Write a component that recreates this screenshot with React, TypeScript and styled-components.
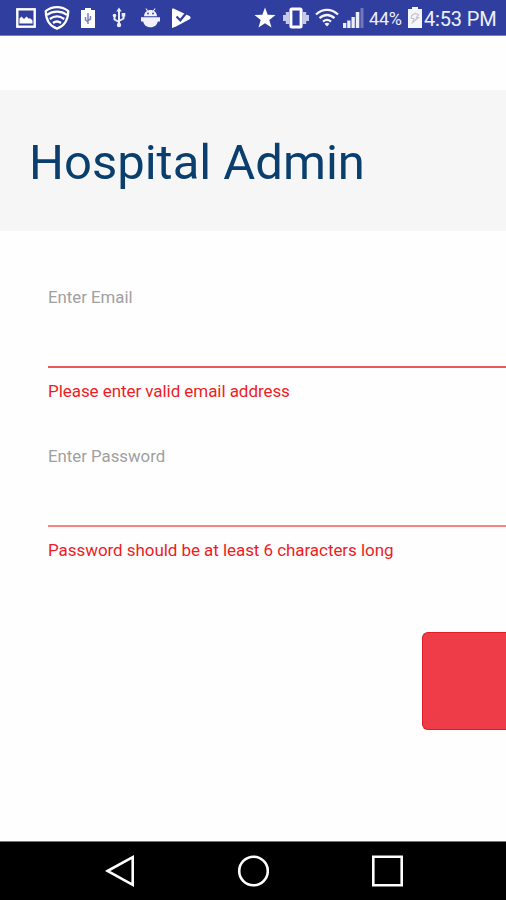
import React from "react";
import styled, { createGlobalStyle } from "styled-components";

const GlobalStyle = createGlobalStyle`
  * { box-sizing: border-box; }
  html, body { margin: 0; padding: 0; overflow: hidden; background: #fff; }
  body { font-family: Roboto, "Liberation Sans", sans-serif; }
`;

const Screen = styled.div`
  width: 100%;
  height: 900px;
  display: flex;
  flex-direction: column;
  overflow: hidden;
  background: #fefefe;
`;

const StatusBar = styled.header`
  height: 36px;
  flex: none;
  display: flex;
  align-items: center;
  justify-content: space-between;
  padding: 0 9px 0 15px;
  background: #303f9f;
  border-bottom: 1px solid #7580be;
  color: #eeeffa;
`;

const StatusGroup = styled.div`
  display: flex;
  align-items: center;
  height: 100%;
`;

const Icon = styled.svg<{ $gap?: number }>`
  display: block;
  flex: none;
  margin-left: ${(p) => p.$gap ?? 0}px;
`;

const Percent = styled.span`
  width: 35px;
  margin-left: 5px;
  padding-top: 2px;
  font-size: 18px;
  line-height: 20px;
  letter-spacing: -0.2px;
  white-space: nowrap;
`;

const Clock = styled.span`
  width: 73px;
  margin-left: 2px;
  padding-top: 3px;
  font-size: 20px;
  line-height: 22px;
  letter-spacing: -0.15px;
  white-space: nowrap;
`;

const TitleBand = styled.div`
  height: 141px;
  flex: none;
  margin-top: 54px;
  padding: 44px 0 0 29px;
  background: #f6f6f6;
`;

const Title = styled.h1`
  margin: 0;
  font-size: 49px;
  font-weight: 400;
  line-height: 58px;
  letter-spacing: 0;
  white-space: nowrap;
  color: #0a3e6d;
`;

const Form = styled.form`
  flex: 1;
  display: flex;
  flex-direction: column;
  padding: 56px 0 0 48px;
`;

const Field = styled.div`
  height: 158.5px;
  flex: none;
  display: flex;
  flex-direction: column;
`;

const Label = styled.label`
  font-size: 16.8px;
  line-height: 21px;
  color: #a0a0a0;
`;

const Input = styled.input<{ $line: string }>`
  width: 100%;
  height: 60px;
  padding: 0;
  border: 0;
  border-bottom: 2px solid ${(p) => p.$line};
  border-radius: 0;
  outline: 0;
  background: transparent;
`;

const ErrorText = styled.span`
  margin-top: 13px;
  font-size: 17px;
  line-height: 20px;
  letter-spacing: -0.06px;
  white-space: nowrap;
  color: #ee1c24;
`;

const Submit = styled.button`
  flex: none;
  align-self: flex-end;
  width: 84px;
  height: 98px;
  margin-top: 28px;
  border: 1.5px solid #e21b26;
  border-right: 0;
  border-radius: 6px 0 0 6px;
  background: #ee3d48;
`;

const NavBar = styled.nav`
  height: 59px;
  flex: none;
  display: flex;
  align-items: center;
  padding-left: 105px;
  border-top: 1px solid #777;
  background: #000;
`;

const NavIcon = styled(Icon)`
  fill: none;
  stroke: #fff;
  stroke-width: 2.6;
`;

function Notifications() {
  return (
    <StatusGroup>
      <Icon width="21" height="20" viewBox="0 0 21 20" fill="none">
        <rect x="2.3" y="1.3" width="17.4" height="17.4" stroke="#fff" strokeWidth="2.4" />
        <path d="M4.500 15.500v-5l2-2 2.500 2.500 2.500-2.500 2 2h2l2 2v3z" fill="#fff" />
      </Icon>
      <Icon $gap={8} width="26" height="24" viewBox="0 0 26 24" fill="none" stroke="#fff" strokeWidth="2.2" strokeLinejoin="round">
        <path d="M13 1.2C9.5 1.2 5 2.5 1.7 5.2C2 14 5.5 20 13 22.6C20.5 20 24 14 24.3 5.2C21 2.5 16.5 1.2 13 1.2Z" />
        <path d="M3 8.8c6-4.2 14-4.2 20 0M5.8 13c4.4-3.2 10-3.2 14.4 0M9 17c2.4-1.8 5.600-1.800 8 0" />
      </Icon>
      <Icon $gap={11} width="14" height="20" viewBox="0 0 14 20">
        <path d="M4 0h6v2h4v18H0V2h4z" fill="#fff" />
        <path d="M7 5v11M4.5 9v3L7 14M9.5 8v3L7 12.5" fill="none" stroke="#7d83b5" strokeWidth="1.5" />
      </Icon>
      <Icon $gap={17} width="14" height="21" viewBox="0 0 14 21" fill="none" stroke="#eceefa" strokeWidth="2">
        <path d="M7 4v13M2.500 9v3.500L7 15M11.500 8v3.500L7 14" />
        <path d="M7 .5l2.700 4H4.300z" fill="#eceefa" stroke="none" />
        <circle cx="2.500" cy="8.500" r="1.800" fill="#eceefa" stroke="none" />
        <path d="M9.700 6h3.600v3.600H9.700z" fill="#eceefa" stroke="none" />
        <circle cx="7" cy="18" r="2.200" fill="#eceefa" stroke="none" />
      </Icon>
      <Icon $gap={15} width="19" height="20" viewBox="0 0 19 20" fill="#f0f1fb">
        <path d="M3 8.300C3 5.500 4.500 3.800 6 3L4.400.8l.8-.5L7 2.500c1.600-.6 3.400-.6 5 0L13.800.3l.8.5L13 3c1.500.8 3 2.500 3 5.300z" />
        <path d="M0 9.300h19v4.200h-2.200c-.6 3.300-3.200 5.800-7.300 5.800s-6.700-2.500-7.300-5.800H0z" />
        <circle cx="7" cy="5.500" r=".9" fill="#303f9f" />
        <circle cx="12" cy="5.500" r=".9" fill="#303f9f" />
      </Icon>
      <Icon $gap={12} width="19" height="20" viewBox="0 0 19 20">
        <path d="M0 1.500Q0 0 1.500.6L17.500 8Q19.300 9 18 11L4 18.500 0 20z" fill="#fff" />
        <path d="M4.500 8.500l3.800 3.800L15 4" fill="none" stroke="#303f9f" strokeWidth="2.200" />
      </Icon>
    </StatusGroup>
  );
}

function SystemStatus() {
  return (
    <StatusGroup>
      <Icon width="22" height="22" viewBox="0 0 22 22" fill="#fff">
        <path d="M11 .5l2.700 7.300 7.800.3-6.200 4.900 2.200 7.500L11 16.200l-6.500 4.300L6.700 13 .5 8.100l7.800-.3z" />
      </Icon>
      <Icon $gap={7} width="26" height="22" viewBox="0 0 26 22">
        <rect x="7.900" y="1.900" width="10.200" height="18.200" rx="1" fill="none" stroke="#fff" strokeWidth="3" />
        <path d="M2.800 5h3.700v12H2.800zM19.500 5h3.700v12h-3.700z" fill="#c6caea" />
        <path d="M0 8h3v6H0zM23 8h3v6h-3z" fill="#c6caea" />
      </Icon>
      <Icon $gap={6} width="24" height="19" viewBox="0 0 24 19" fill="none" stroke="#f4f5fc" strokeWidth="2.300">
        <path d="M1 6.500c6.500-6.300 15.500-6.300 22 0M4.500 10.200c4.500-4.300 10.500-4.300 15 0M8 13.600c2.500-2.200 5.500-2.200 8 0" />
        <path d="M12 18.500l-2.500-2.800q2.500-1.800 5 0z" fill="#f4f5fc" stroke="none" />
      </Icon>
      <Icon $gap={4} width="21" height="20" viewBox="0 0 21 20" fill="#eceefa">
        <path d="M0 15h3.300v5H0zM4.200 12.500h3.300V20H4.200zM8.500 9h3.300v11H8.500zM12.800 4h3.500v16h-3.500z" />
        <path d="M17.500 0h3v20h-3z" fill="#7078bb" />
      </Icon>
      <Percent>44%</Percent>
      <Icon $gap={4} width="14" height="21" viewBox="0 0 14 21">
        <path d="M4 0h6v2h4v19H0V2h4z" fill="#f5f5fa" />
        <path d="M3.500 8.500l4-2 3 1-2 3h2l-6 5 1.500-4H3.500z" fill="none" stroke="#c5c3cf" strokeWidth="1.200" />
      </Icon>
      <Clock>4:53 PM</Clock>
    </StatusGroup>
  );
}

export default function App() {
  return (
    <>
      <GlobalStyle />
      <Screen>
        <StatusBar>
          <Notifications />
          <SystemStatus />
        </StatusBar>
        <TitleBand>
          <Title>Hospital Admin</Title>
        </TitleBand>
        <Form noValidate onSubmit={(e) => e.preventDefault()}>
          <Field>
            <Label htmlFor="email">Enter Email</Label>
            <Input id="email" type="email" $line="#e95a5c" />
            <ErrorText>Please enter valid email address</ErrorText>
          </Field>
          <Field>
            <Label htmlFor="password">Enter Password</Label>
            <Input id="password" type="password" $line="#fa8583" />
            <ErrorText>Password should be at least 6 characters long</ErrorText>
          </Field>
          <Submit type="submit" aria-label="Sign in" />
        </Form>
        <NavBar>
          <NavIcon width="30" height="32" viewBox="0 0 30 32">
            <path d="M2.500 16L27.700 2.200v27.600z" />
          </NavIcon>
          <NavIcon $gap={102} width="32" height="32" viewBox="0 0 32 32">
            <circle cx="16.500" cy="16" r="14.300" />
          </NavIcon>
          <NavIcon $gap={102} width="32" height="32" viewBox="0 0 32 32">
            <path d="M2.300 1.800h28.400v28.400H2.300z" />
          </NavIcon>
        </NavBar>
      </Screen>
    </>
  );
}
